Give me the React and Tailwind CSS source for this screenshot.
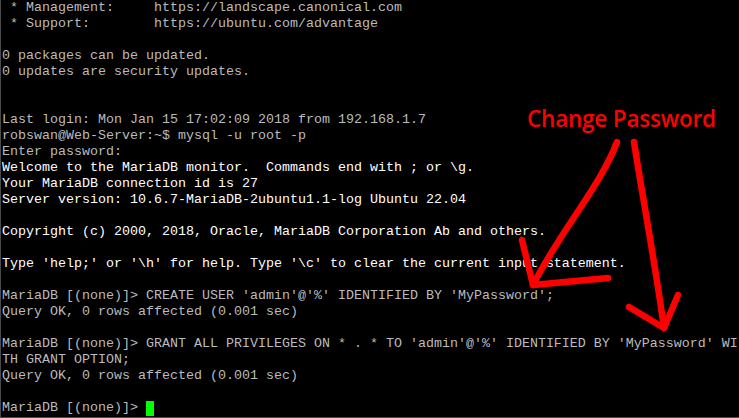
const lines = [
  { t: " * Management:     https://landscape.canonical.com" },
  { t: " * Support:        https://ubuntu.com/advantage" },
  { t: "" },
  { t: "0 packages can be updated." },
  { t: "0 updates are security updates." },
  { t: "" },
  { t: "" },
  { t: "Last login: Mon Jan 15 17:02:09 2018 from 192.168.1.7" },
  { t: "robswan@Web-Server:~$ mysql -u root -p" },
  { t: "Enter password:" },
  { t: "Welcome to the MariaDB monitor.  Commands end with ; or \\g.", bright: true },
  { t: "Your MariaDB connection id is 27", bright: true },
  { t: "Server version: 10.6.7-MariaDB-2ubuntu1.1-log Ubuntu 22.04", bright: true },
  { t: "" },
  { t: "Copyright (c) 2000, 2018, Oracle, MariaDB Corporation Ab and others.", bright: true },
  { t: "" },
  { t: "Type 'help;' or '\\h' for help. Type '\\c' to clear the current input statement.", bright: true },
  { t: "" },
  { t: "MariaDB [(none)]> CREATE USER 'admin'@'%' IDENTIFIED BY 'MyPassword';" },
  { t: "Query OK, 0 rows affected (0.001 sec)" },
  { t: "" },
  { t: "MariaDB [(none)]> GRANT ALL PRIVILEGES ON * . * TO 'admin'@'%' IDENTIFIED BY 'MyPassword' WI" },
  { t: "TH GRANT OPTION;" },
  { t: "Query OK, 0 rows affected (0.001 sec)" },
  { t: "" },
];

export default function App() {
  return (
    <div className="relative w-[739px] h-[418px] overflow-hidden bg-black border-l border-b border-[#4a4a4a]">
      <div className="pl-px font-['Liberation_Mono',monospace] text-[13.33px] leading-[16px] whitespace-pre">
        {lines.map((l, i) => (
          <div key={i} className={`h-4 ${l.bright ? "text-white" : "text-[#bbbbbb]"}`}>
            {l.t}
          </div>
        ))}
        <div className="h-4 flex items-center text-[#bbbbbb]">
          <span>MariaDB [(none)]&gt; </span>
          <span className="w-[8px] h-[15px] bg-[#00ff00]" />
        </div>
      </div>

      {/* annotation */}
      <div className="absolute left-[526px] top-[104px] font-['Open_Sans',sans-serif] font-semibold text-[22.5px] leading-[30px] text-[#ff0000] tracking-[-0.2px]">
        Change Password
      </div>
      <svg className="absolute inset-0" width="739" height="418" viewBox="0 0 739 418">
        <g fill="none" stroke="#ff0000" strokeWidth="6.5" strokeLinecap="round" strokeLinejoin="round">
          <path d="M616 142 C 600 185, 560 230, 532 285" />
          <path d="M521 240 L532 285 L607 278" />
          <path d="M633 142 C 642 200, 652 250, 663 328" />
          <path d="M628 307 L663 328 L677 295" />
        </g>
      </svg>
    </div>
  );
}
